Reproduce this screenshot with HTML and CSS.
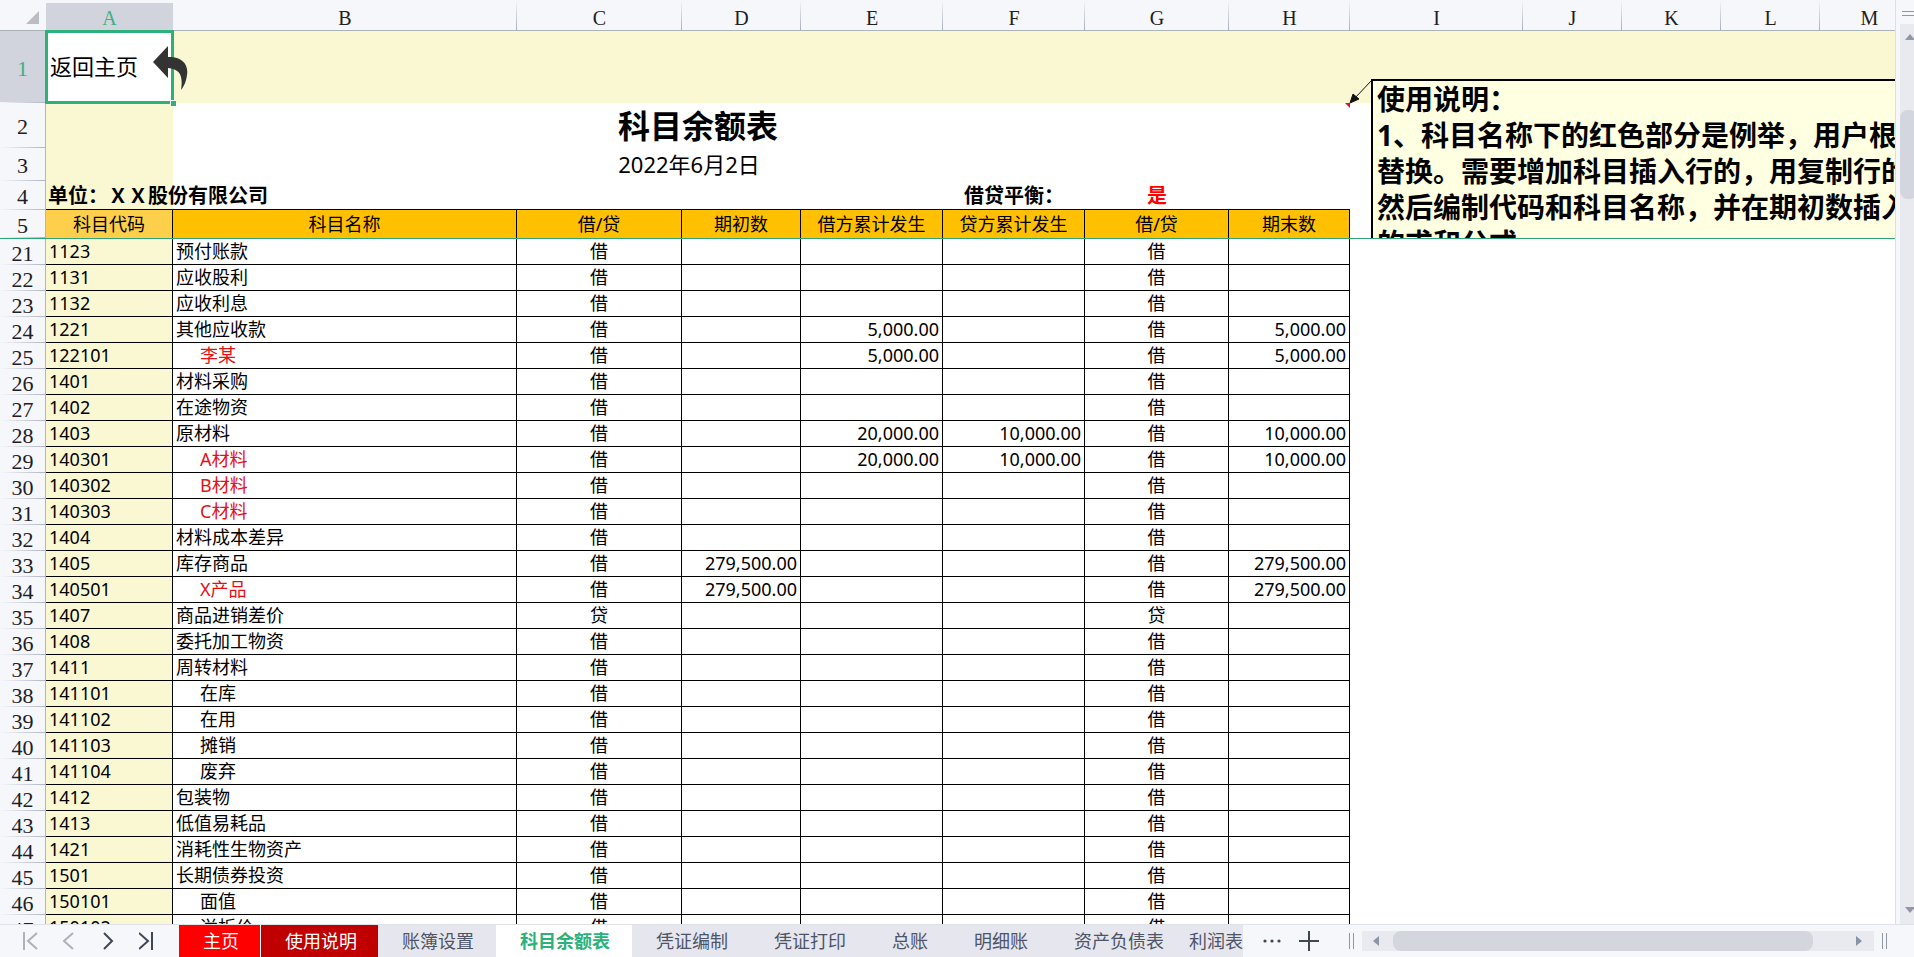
FILE: index.html
```html
<!DOCTYPE html>
<html lang="zh-CN">
<head>
<meta charset="utf-8">
<title>科目余额表</title>
<link rel="stylesheet" href="styles.css">
</head>
<body>
<div class="workspace">
  <main class="sheet">
    <div class="frozen">
      <table class="grid">
        <colgroup><col class="c-num"><col class="c-a"><col class="c-b"><col class="c-c"><col class="c-d"><col class="c-e"><col class="c-f"><col class="c-g"><col class="c-h"><col class="c-i"><col class="c-j"><col class="c-k"><col class="c-l"><col></colgroup>
        <thead>
          <tr class="letters">
            <th class="corner"><svg width="13" height="13" viewBox="0 0 13 13"><path d="M13 0V13H0Z" fill="#bcbdc1"/></svg></th>
            <th class="selected">A</th><th>B</th><th>C</th><th>D</th><th>E</th><th>F</th><th>G</th><th>H</th><th>I</th><th>J</th><th>K</th><th>L</th><th class="last-letter">M</th>
          </tr>
        </thead>
        <tbody>
          <tr class="row-1"><th class="num selected">1</th>
            <td class="active-cell"><a href="#" class="back">返回主页</a><i class="handle"></i>
              <svg class="back-arrow" width="35" height="44" viewBox="0 0 35 44"><path d="M0 16L15 0V11C27 10 36 17 34 29C33 36 31 40 28 44C30 31 28 23 15 22V32Z" fill="#333"/></svg></td>
            <td colspan="12" class="band"></td></tr>
          <tr class="row-2"><th class="num">2</th><td colspan="8" class="tint title">科目余额表</td><td colspan="5"></td></tr>
          <tr class="row-3"><th class="num">3</th><td colspan="8" class="tint date">2022年6月2日</td><td colspan="5"></td></tr>
          <tr class="row-4"><th class="num">4</th><td colspan="5" class="tint company">单位：ＸＸ股份有限公司</td><td class="center">借贷平衡：</td><td class="center balanced">是</td><td></td><td colspan="5" class="plain"></td></tr>
          <tr class="row-5"><th class="num">5</th><td class="head code-head">科目代码</td><td class="head">科目名称</td><td class="head">借/贷</td><td class="head">期初数</td><td class="head">借方累计发生</td><td class="head">贷方累计发生</td><td class="head">借/贷</td><td class="head">期末数</td><td colspan="5"></td></tr>
        </tbody>
      </table>
      <svg class="leader" width="30" height="32" viewBox="0 0 30 32"><path d="M27 1L9 20" stroke="#111" stroke-width="1"/><path d="M5 24L8 15L14 20Z" fill="#111" stroke="#111"/><path d="M0 24H5V29Z" fill="#e0101c"/></svg>
      <aside class="note">
        <p>使用说明：</p>
        <p>1、科目名称下的红色部分是例举，用户根据</p>
        <p>替换。需要增加科目插入行的，用复制行的</p>
        <p>然后编制代码和科目名称，并在期初数插入</p>
        <p>的求和公式</p>
      </aside>
    </div>
    <table class="grid ledger">
      <colgroup><col class="c-num"><col class="c-a"><col class="c-b"><col class="c-c"><col class="c-d"><col class="c-e"><col class="c-f"><col class="c-g"><col class="c-h"></colgroup>
      <tbody>
        <tr><th class="num">21</th><td>1123</td><td>预付账款</td><td>借</td><td></td><td></td><td></td><td>借</td><td></td></tr>
        <tr><th class="num">22</th><td>1131</td><td>应收股利</td><td>借</td><td></td><td></td><td></td><td>借</td><td></td></tr>
        <tr><th class="num">23</th><td>1132</td><td>应收利息</td><td>借</td><td></td><td></td><td></td><td>借</td><td></td></tr>
        <tr><th class="num">24</th><td>1221</td><td>其他应收款</td><td>借</td><td></td><td>5,000.00</td><td></td><td>借</td><td>5,000.00</td></tr>
        <tr><th class="num">25</th><td>122101</td><td class="sub example">李某</td><td>借</td><td></td><td>5,000.00</td><td></td><td>借</td><td>5,000.00</td></tr>
        <tr><th class="num">26</th><td>1401</td><td>材料采购</td><td>借</td><td></td><td></td><td></td><td>借</td><td></td></tr>
        <tr><th class="num">27</th><td>1402</td><td>在途物资</td><td>借</td><td></td><td></td><td></td><td>借</td><td></td></tr>
        <tr><th class="num">28</th><td>1403</td><td>原材料</td><td>借</td><td></td><td>20,000.00</td><td>10,000.00</td><td>借</td><td>10,000.00</td></tr>
        <tr><th class="num">29</th><td>140301</td><td class="sub example">A材料</td><td>借</td><td></td><td>20,000.00</td><td>10,000.00</td><td>借</td><td>10,000.00</td></tr>
        <tr><th class="num">30</th><td>140302</td><td class="sub example">B材料</td><td>借</td><td></td><td></td><td></td><td>借</td><td></td></tr>
        <tr><th class="num">31</th><td>140303</td><td class="sub example">C材料</td><td>借</td><td></td><td></td><td></td><td>借</td><td></td></tr>
        <tr><th class="num">32</th><td>1404</td><td>材料成本差异</td><td>借</td><td></td><td></td><td></td><td>借</td><td></td></tr>
        <tr><th class="num">33</th><td>1405</td><td>库存商品</td><td>借</td><td>279,500.00</td><td></td><td></td><td>借</td><td>279,500.00</td></tr>
        <tr><th class="num">34</th><td>140501</td><td class="sub example">X产品</td><td>借</td><td>279,500.00</td><td></td><td></td><td>借</td><td>279,500.00</td></tr>
        <tr><th class="num">35</th><td>1407</td><td>商品进销差价</td><td>贷</td><td></td><td></td><td></td><td>贷</td><td></td></tr>
        <tr><th class="num">36</th><td>1408</td><td>委托加工物资</td><td>借</td><td></td><td></td><td></td><td>借</td><td></td></tr>
        <tr><th class="num">37</th><td>1411</td><td>周转材料</td><td>借</td><td></td><td></td><td></td><td>借</td><td></td></tr>
        <tr><th class="num">38</th><td>141101</td><td class="sub">在库</td><td>借</td><td></td><td></td><td></td><td>借</td><td></td></tr>
        <tr><th class="num">39</th><td>141102</td><td class="sub">在用</td><td>借</td><td></td><td></td><td></td><td>借</td><td></td></tr>
        <tr><th class="num">40</th><td>141103</td><td class="sub">摊销</td><td>借</td><td></td><td></td><td></td><td>借</td><td></td></tr>
        <tr><th class="num">41</th><td>141104</td><td class="sub">废弃</td><td>借</td><td></td><td></td><td></td><td>借</td><td></td></tr>
        <tr><th class="num">42</th><td>1412</td><td>包装物</td><td>借</td><td></td><td></td><td></td><td>借</td><td></td></tr>
        <tr><th class="num">43</th><td>1413</td><td>低值易耗品</td><td>借</td><td></td><td></td><td></td><td>借</td><td></td></tr>
        <tr><th class="num">44</th><td>1421</td><td>消耗性生物资产</td><td>借</td><td></td><td></td><td></td><td>借</td><td></td></tr>
        <tr><th class="num">45</th><td>1501</td><td>长期债券投资</td><td>借</td><td></td><td></td><td></td><td>借</td><td></td></tr>
        <tr><th class="num">46</th><td>150101</td><td class="sub">面值</td><td>借</td><td></td><td></td><td></td><td>借</td><td></td></tr>
        <tr><th class="num">47</th><td>150102</td><td class="sub">溢折价</td><td>借</td><td></td><td></td><td></td><td>借</td><td></td></tr>
      </tbody>
    </table>
  </main>
  <div class="v-scroll">
    <div class="split-grip"></div>
    <div class="v-track">
      <svg width="18" height="6" viewBox="0 0 18 6"><path d="M5 6L10 0L15 6Z" fill="#8f96a6"/></svg>
      <div class="v-thumb"></div>
      <svg width="18" height="6" viewBox="0 0 18 6"><path d="M5 0H15L10 6Z" fill="#8f96a6"/></svg>
    </div>
  </div>
</div>
<footer class="bottom">
  <nav class="steps">
    <button aria-label="第一张"><svg width="16" height="18" viewBox="0 0 16 18"><path d="M2 0V18M15 1L6 9L15 17" stroke="#adb1b9"/></svg></button>
    <button aria-label="上一张"><svg width="16" height="18" viewBox="0 0 16 18"><path d="M12 1L3 9L12 17" stroke="#adb1b9"/></svg></button>
    <button aria-label="下一张"><svg width="16" height="18" viewBox="0 0 16 18"><path d="M4 1L12 9L4 17" stroke="#3f4654"/></svg></button>
    <button aria-label="最后一张"><svg width="16" height="18" viewBox="0 0 16 18"><path d="M13 0V18M0 1L9 9L0 17" stroke="#3f4654"/></svg></button>
  </nav>
  <div class="tabs">
    <button class="tab home">主页</button>
    <button class="tab guide">使用说明</button>
    <button class="tab">账簿设置</button>
    <button class="tab current">科目余额表</button>
    <button class="tab">凭证编制</button>
    <button class="tab">凭证打印</button>
    <button class="tab">总账</button>
    <button class="tab">明细账</button>
    <button class="tab">资产负债表</button>
    <button class="tab cut">利润表</button>
  </div>
  <div class="tools">
    <button aria-label="更多工作表"><svg width="20" height="20" viewBox="0 0 20 20"><g fill="#3f4654"><circle cx="3" cy="10" r="1.6"/><circle cx="10" cy="10" r="1.6"/><circle cx="17" cy="10" r="1.6"/></g></svg></button>
    <button aria-label="新建工作表"><svg width="20" height="20" viewBox="0 0 20 20"><path d="M10 0V20M0 10H20" stroke="#3f4654"/></svg></button>
  </div>
  <div class="grip"></div>
  <div class="h-track">
    <svg width="6" height="10" viewBox="0 0 6 10"><path d="M6 0V10L0 5Z" fill="#8f93a8"/></svg>
    <div class="h-thumb"></div>
    <svg width="6" height="10" viewBox="0 0 6 10"><path d="M0 0L6 5L0 10Z" fill="#8496a6"/></svg>
  </div>
  <div class="grip"></div>
</footer>
</body>
</html>
```

FILE: styles.css
```css
* { box-sizing: border-box; }

body {
  margin: 0;
  height: 100vh;
  display: flex;
  flex-direction: column;
  overflow: hidden;
  background: #f5f7fa;
  color: #000;
  font: 18px/24px "Noto Sans", "Noto Sans CJK SC", sans-serif;
}

button {
  margin: 0;
  padding: 0;
  border: 0;
  background: none;
  color: inherit;
  font: inherit;
}

svg { display: block; fill: none; }

.workspace { flex: 1; min-height: 0; display: flex; }

.sheet {
  flex: 1;
  min-width: 0;
  overflow: hidden;
  background: #fff;
  border-right: 1px solid #dcdfe6;
}

.frozen { position: relative; overflow: hidden; border-bottom: 1px solid #2fa377; }

/* Grid */
.grid {
  width: 100%;
  table-layout: fixed;
  border-collapse: separate;
  border-spacing: 0;
}
.ledger { width: 1350px; }

.c-num { width: 46px; }
.c-a { width: 127px; }
.c-b { width: 344px; }
.c-c { width: 165px; }
.c-d { width: 119px; }
.c-e, .c-f { width: 142px; }
.c-g { width: 144px; }
.c-h { width: 121px; }
.c-i { width: 173px; }
.c-j, .c-k, .c-l { width: 99px; }

.grid th, .grid td { padding: 0; white-space: nowrap; }

.grid .letters th {
  height: 31px;
  padding-top: 6px;
  border-bottom: 1px solid #a9b3b8;
  background: linear-gradient(#f5f7fa, #a9aebb) right / 1px 100% no-repeat #f5f7fa;
  color: #1c2027;
  font: 20px/24px "Liberation Serif", serif;
}
.grid .letters .selected {
  background: linear-gradient(#f5f7fa, #f5f7fa) top / 100% 3px no-repeat #d1d4dc;
  color: #3fb083;
}
.grid .letters .corner { background: #f5f7fa; padding: 4px 0 0 26px; }
.grid .letters .last-letter { padding-left: 24px; background: #f5f7fa; }

.num {
  border-right: 1px solid #b0b5c5;
  background: linear-gradient(to right, #f5f7fa, #b0b5c5) bottom / 100% 1px no-repeat #f5f7fa;
  color: #1c2027;
  font: 22px/22px "Liberation Serif", serif;
}
.grid .num { padding-top: 3px; }
.num.selected { background-color: #d1d4dc; color: #3fb083; }

.row-1 td { height: 72px; }
.row-2 td { height: 45px; }
.row-3 td { height: 33px; }
.row-4 td { height: 29px; }
.row-5 td { height: 28px; }

.band { background: #faf8d2; }
.tint { background: linear-gradient(#faf8d2, #faf8d2) left / 127px 100% no-repeat; }
.center, .title, .date { text-align: center; }

.active-cell {
  position: relative;
  outline: 3px solid #2bb179;
  outline-offset: -2px;
  background: #fff;
}
.back { padding-left: 4px; color: #000; font-size: 22px; text-decoration: none; }
.handle {
  position: absolute;
  right: -3px;
  bottom: -3px;
  width: 6px;
  height: 6px;
  border: 1px solid #fff;
  border-width: 1px 0 0 1px;
  background: #2bb179;
  z-index: 1;
}
.back-arrow { position: absolute; left: 107px; top: 15px; z-index: 1; }

.title { font-size: 32px; font-weight: 700; line-height: 40px; }
.grid .date { padding: 0 18px 2px 0; font-size: 22px; }

.grid .row-4 td { padding-top: 2px; border-bottom: 1px solid #000; font-size: 20px; font-weight: 700; }
.grid .row-4 .plain { border-bottom: 0; }
.grid .row-4 .company { padding-left: 2px; }
.balanced { color: #f00; }

.head { border-right: 1px solid #000; background: #ffc000; text-align: center; }
.code-head { background: #fdcf4a; }

.grid.ledger td {
  height: 26px;
  border-right: 1px solid #000;
  border-bottom: 1px solid #000;
  padding: 0 3px 2px 0;
  line-height: 22px;
  text-align: right;
}
.grid.ledger td:nth-child(2) { padding-left: 3px; background: #faf8d2; text-align: left; }
.grid.ledger td:nth-child(3) { padding-left: 3px; text-align: left; }
.grid.ledger td:nth-child(4), .grid.ledger td:nth-child(8) { padding-right: 0; text-align: center; }
.grid.ledger td.sub:nth-child(3) { padding-left: 27px; }
.example { color: #e60f14; }

/* Cell comment */
.leader { position: absolute; left: 1345px; top: 79px; }
.note {
  position: absolute;
  left: 1371px;
  right: 0;
  top: 79px;
  overflow: hidden;
  padding-left: 4px;
  border: 2px solid #000;
  border-width: 2px 0 0 2px;
  background: #ffffe1;
  font-size: 28px;
  font-weight: 700;
  line-height: 36px;
  white-space: nowrap;
}
.note p { margin: 0; }

/* Vertical scroll bar */
.v-scroll { width: 18px; padding-left: 4px; overflow: hidden; display: flex; flex-direction: column; }
.split-grip { height: 5px; margin: 11px 0 8px 2px; border: 1px solid #8f96a6; border-width: 1px 0; }
.v-track {
  flex: 1;
  width: 18px;
  padding: 10px 0 11px;
  display: flex;
  flex-direction: column;
  background: #e8eaf0;
}
.v-thumb { height: 89px; margin: 70px 0 auto; border-radius: 8px; background: #d3d6de; }

/* Bottom bar */
.bottom {
  height: 33px;
  display: flex;
  align-items: center;
  border-top: 1px solid #e0e2e8;
}
.steps { width: 179px; padding-left: 22px; display: flex; gap: 23px; }
.steps path, .tools path { stroke-width: 2; }
.tabs { display: flex; align-self: stretch; width: 1064px; overflow: hidden; background: #e6e7ee; }
.tab { flex: none; padding: 0 22px 0 24px; color: #4d5467; }
.home { background: #f00; color: #fff; border-right: 1px solid #fff; padding-right: 21px; }
.guide { background: #c00000; color: #fff; padding-right: 21px; }
.current { background: #fff; color: #2bb179; font-weight: 700; }
.cut { padding: 0 0 0 3px; }
.tools { display: flex; gap: 17px; padding: 0 30px 0 19px; }
.grip { width: 5px; height: 16px; border: 1px solid #8f96a6; border-width: 0 1px; }
.h-track {
  flex: 1;
  height: 20px;
  margin: 0 8px;
  padding: 0 12px 0 11px;
  display: flex;
  align-items: center;
  background: #e8eaf0;
}
.h-thumb { flex: 1; height: 20px; margin: 0 43px 0 14px; border-radius: 8px; background: #d3d6dd; }
.grip:last-child { margin-right: 27px; }
```
